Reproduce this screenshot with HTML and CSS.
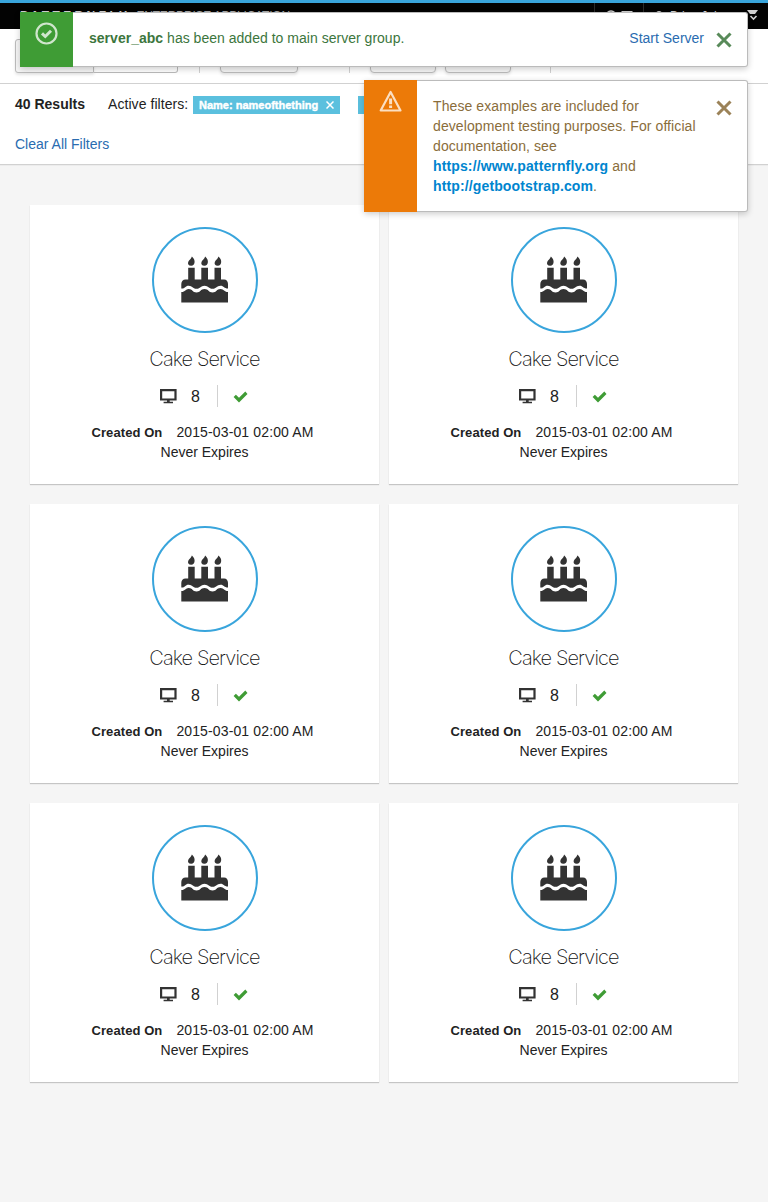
FILE: index.html
```html
<!DOCTYPE html>
<html lang="en">
<head>
<meta charset="utf-8">
<title>PatternFly Card View</title>
<link rel="stylesheet" href="styles.css">
</head>
<body>
<svg class="sprite" aria-hidden="true">
  <symbol id="cake" viewBox="0 0 48 48">
    <path d="M10.200 9.800C7.400 9.700 6.400 7.800 7.300 5.700C8.100 4 10 3.200 10.900 .5C13 2.300 13.700 4.300 13.600 6C13.500 8.200 12.200 9.700 10.200 9.800zM23.500 9.800C20.700 9.700 19.700 7.800 20.600 5.700C21.400 4 23.300 3.200 24.200 .5C26.300 2.300 27 4.300 26.900 6C26.800 8.200 25.500 9.700 23.500 9.800zM36.800 9.800C34 9.700 33 7.800 33.900 5.700C34.700 4 36.600 3.200 37.500 .5C39.600 2.300 40.300 4.300 40.200 6C40.100 8.200 38.800 9.700 36.800 9.800z"/>
    <path d="M7.200 11.700H13.700V23.500H20.300V11.700H27V23.500H33.500V11.700H40V23.500H43C45.500 23.500 47 25.500 47 28V32.500C43 32.500 43 29.700 39.500 29.700C35.500 29.700 35.500 32.800 31.500 32.800C27.500 32.800 27.500 29.700 23.500 29.700C19.500 29.700 19.500 32.800 15.500 32.800C11.500 32.800 11.500 29.700 7.700 29.700C4 29.700 4 32.800 .3 32.500V28C.3 25.500 2 23.500 4.500 23.500H7.200z"/>
    <path d="M.3 36C4.500 36 4.500 32.900 7.700 32.900C11.500 32.900 11.500 36.400 15.500 36.400C19.500 36.400 19.500 32.900 23.500 32.900C27.500 32.900 27.500 36.400 31.500 36.400C35.500 36.400 35.500 32.900 39.500 32.900C43 32.900 43 36 47 36V46.500H.3z"/>
  </symbol>
  <symbol id="screen" viewBox="0 0 17 15"><path fill-rule="evenodd" d="M0 0H16.600V11.600H9.700V12.800H13V14.200H3.600V12.800H7V11.600H0zM2.200 2.200V9.400H14.400V2.200z"/></symbol>
  <symbol id="ok" viewBox="0 0 15 12"><path d="M.6 6L2.900 3.700L6 6.700L12.300 .6L14.500 2.900L6 11.400z"/></symbol>
  <symbol id="close" viewBox="0 0 16 16"><path d="M1.500 1.500L14.500 14.500M14.500 1.500L1.500 14.500" fill="none" stroke="currentColor" stroke-width="3"/></symbol>
</svg>

<header class="navbar">
  <div class="brand"><b>PATTERNFLY</b><span>ENTERPRISE APPLICATION</span></div>
  <div class="nav-item help">
    <svg width="30" height="14" viewBox="0 0 30 14" fill="none" stroke="#d1d1d1" stroke-width="1.500"><circle cx="7" cy="7" r="5"/><path d="M17 2H29L23 8z" fill="#d1d1d1" stroke="none"/></svg>
  </div>
  <div class="nav-item user">
    <svg width="10" height="14" viewBox="0 0 10 14" fill="#d1d1d1"><circle cx="5" cy="4" r="3"/><path d="M0 13V9H10V13z"/></svg>
    <span>Brian Johnson</span>
  </div>
  <svg class="nav-caret" width="12" height="14" viewBox="0 0 12 14"><path d="M0 1H11L8 5H3z" fill="#d1d1d1"/><path d="M3.500 7L6.500 10L9.500 7" fill="none" stroke="#d1d1d1" stroke-width="1.600"/></svg>
</header>

<section class="toolbar">
  <div class="controls">
    <span class="button name"></span><span class="field"></span><i class="rule r1"></i><span class="button sort"></span><i class="rule r2"></i><span class="button action1"></span><span class="button action2"></span><i class="rule r3"></i>
  </div>
  <div class="results">
    <div class="result-line"><b class="count">40 Results</b><span class="active">Active filters:</span><span class="label"><span>Name: nameofthething</span><svg width="8" height="8" viewBox="0 0 8 8"><path d="M.5 .5L7.500 7.500M7.500 .5L.5 7.500" stroke="#fff" stroke-width="1.500"/></svg></span><span class="label second"></span></div>
    <a class="clear">Clear All Filters</a>
  </div>
</section>

<main class="cards" id="cards"></main>

<aside class="toast success">
  <div class="toast-icon"><svg width="24" height="24" viewBox="0 0 24 24" fill="none" stroke="#d0e6cd"><circle cx="11.500" cy="11.500" r="10" stroke-width="2.200"/><path d="M7 11.300L10.300 14.500L16 8.800" stroke-width="3"/></svg></div>
  <p class="message"><b>server_abc</b> <span>has been added to main server group.</span></p>
  <a class="start">Start Server</a>
  <svg class="close"><use href="#close"/></svg>
</aside>
<aside class="toast warning">
  <div class="toast-icon"><svg width="24" height="24" viewBox="0 0 24 24" fill="none" stroke="#fbdfc2"><path d="M11.600 2L21.500 20.500H1.700z" stroke-width="2.200" stroke-linejoin="round"/><path d="M11.600 8.500V14.300M11.600 15.500V18" stroke-width="3"/></svg></div>
  <p class="message">These examples are included for<br>development testing purposes. For official<br>documentation, see<br><b>https://www.patternfly.org</b> and<br><b>http://getbootstrap.com</b>.</p>
  <svg class="close"><use href="#close"/></svg>
</aside>
<script src="cards.js"></script>
</body>
</html>
```
FILE: cards.js
```js
const card = `
  <article class="card">
    <div class="circle"><svg width="48" height="48"><use href="#cake"/></svg></div>
    <h2><span>Cake Service</span></h2>
    <div class="stats">
      <svg class="screen"><use href="#screen"/></svg><span class="number">8</span>
      <i></i><svg class="ok"><use href="#ok"/></svg>
    </div>
    <p class="created"><b>Created On</b><span>2015-03-01 02:00 AM</span></p>
    <p class="expires"><span>Never Expires</span></p>
  </article>`;
document.getElementById("cards").innerHTML = card.repeat(6);
```
FILE: styles.css
```css
* { box-sizing: border-box; }
body { margin: 0; min-height: 1202px; background: #f5f5f5; color: #222; font: 14px/20px "Liberation Sans", Arial, sans-serif; }
p, h2 { margin: 0; }
.sprite { position: absolute; width: 0; height: 0; }
.navbar { height: 29px; display: flex; background: #030303; border-top: 3px solid #39a5dc; color: #d1d1d1; overflow: hidden; font-size: 12px; }
.brand { width: 594px; padding: 3px 0 0 20px; display: flex; gap: 6px; white-space: nowrap; }
.brand b { letter-spacing: 3.400px; }
.brand span { color: #aaa; letter-spacing: -.2px; }
.nav-item { border-left: 1px solid #2b2b2b; padding-top: 6px; }
.help { width: 49px; padding-left: 9px; }
.user { width: 104px; padding: 7px 0 0 10px; display: flex; gap: 6px; white-space: nowrap; overflow: hidden; }
.user span { line-height: 12px; }
.nav-caret { margin-top: 6px; }
.toolbar { height: 136px; background: #fff; border-bottom: 1px solid #d1d1d1; box-shadow: 0 1px 0 #ececec; }
.controls { height: 55px; padding: 10px 15px 0; display: flex; border-bottom: 1px solid #d1d1d1; }
.button, .field { height: 34px; border: 1px solid #bbb; border-radius: 4px; }
.button { background: #f5f5f5; box-shadow: 0 2px 3px rgba(3,3,3,.1); }
.name { width: 79px; border-radius: 3px 0 0 3px; }
.field { width: 84px; border-left: 0; border-radius: 0 3px 3px 0; }
.sort { width: 78px; margin-left: 20px; }
.rule { width: 1px; height: 34px; background: #d1d1d1; }
.r1 { margin-left: 21px; }
.r2 { margin-left: 51px; }
.r3 { margin-left: 39px; }
.action1 { width: 66px; margin-left: 20px; }
.action2 { width: 66px; margin-left: 9px; }
.results { padding: 10px 15px; }
.result-line { height: 20px; display: flex; margin-bottom: 20px; }
.count { width: 93px; }
.active { width: 85px; white-space: nowrap; letter-spacing: .06px; }
.label { width: 147px; height: 18px; margin-top: 2px; padding: 0 6px; display: flex; align-items: center; justify-content: space-between; background: #5bc0de; color: #fff; font-size: 11px; font-weight: 700; white-space: nowrap; -webkit-text-stroke: .4px #fff; }
.second { margin-left: 18px; }
.clear, .start { color: #2a6cb0; }
.cards { padding: 40px 30px 0; display: grid; grid-template-columns: 349px 349px; gap: 20px 10px; }
.card { height: 279px; padding-top: 22px; background: #fff; box-shadow: 0 1px 1px rgba(3,3,3,.2); text-align: center; }
.circle { width: 106px; height: 106px; margin: 0 auto; border: 2px solid #39a5dc; border-radius: 50%; display: flex; align-items: center; justify-content: center; fill: #333; }
h2 { margin-top: 15px; color: #111; font: 200 20px/22px Inter, "Open Sans", sans-serif; letter-spacing: -.9px; }
.stats { height: 22px; margin-top: 15px; padding-left: 130px; display: flex; align-items: center; }
.screen { width: 17px; height: 15px; margin: 0 1px 0 0; fill: #333; }
.number { width: 9px; margin-left: 13px; padding-top: 2px; font-size: 16px; }
.stats i { width: 1px; height: 22px; margin: 0 15px 0 17px; background: #d1d1d1; }
.ok { width: 15px; height: 12px; margin-top: 1px; fill: #3f9c35; }
.created { height: 20px; margin-top: 15px; padding-right: 4px; display: flex; align-items: baseline; justify-content: center; gap: 14px; }
.created b { font-size: 13px; letter-spacing: .08px; }
.created span { letter-spacing: .13px; }
.toast { position: absolute; display: flex; border: 1px solid #bbb; border-left: 0; border-radius: 3px; background: #fff; box-shadow: 0 2px 6px rgba(3,3,3,.2); }
.success { top: 12px; left: 20px; width: 728px; height: 55px; color: #3c763d; }
.warning { top: 80px; left: 364px; width: 384px; height: 132px; color: #8a6d3b; }
.toast-icon { width: 53px; margin: -1px 0; padding-top: 10px; text-align: center; }
.success .toast-icon { background: #3f9c35; }
.warning .toast-icon { background: #ec7a08; }
.message { padding: 15px 0 0 16px; white-space: nowrap; letter-spacing: .02px; }
.warning .message { letter-spacing: .09px; }
.warning .message b { color: #0085cf; letter-spacing: .13px; }
.start { margin: 15px 12px 0 auto; }
.close { width: 16px; height: 16px; margin: 19px 15px 0 0; opacity: .85; }
.warning .close { margin-left: auto; }
```
